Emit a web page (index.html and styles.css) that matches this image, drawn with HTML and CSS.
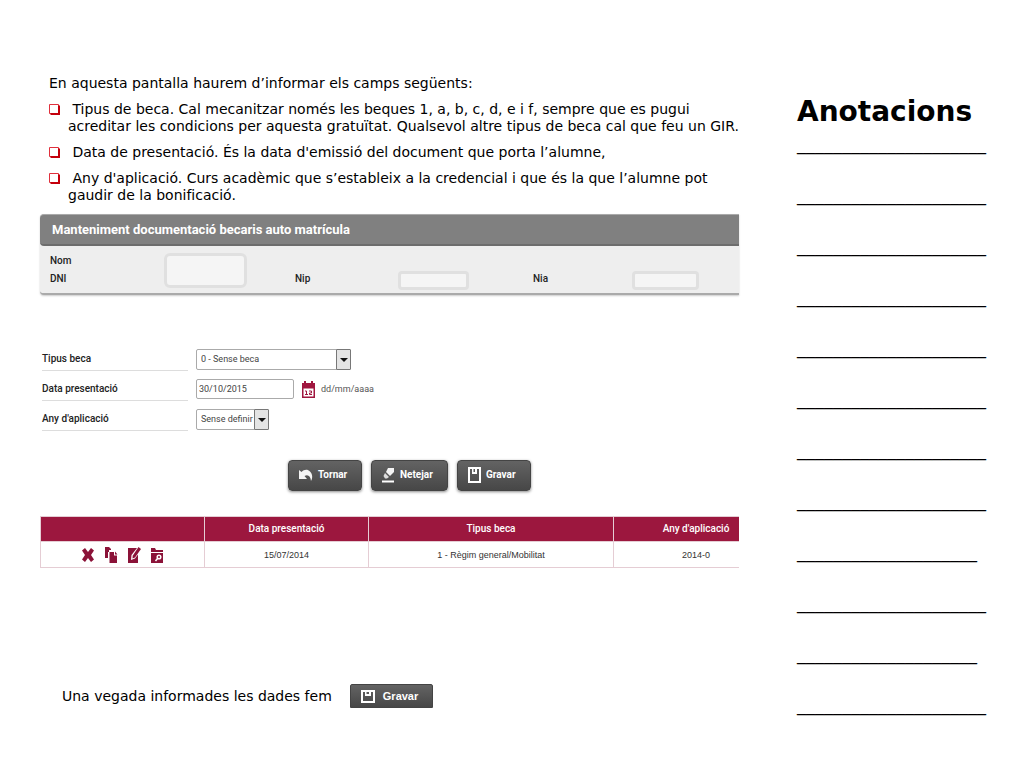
FILE: index.html
```html
<!DOCTYPE html>
<html lang="ca">
<head>
<meta charset="utf-8">
<meta name="viewport" content="width=device-width, initial-scale=1">
<title>Manteniment documentació becaris</title>
<link rel="stylesheet" href="styles.css">
</head>
<body>
<div class="slide">
  <main class="content">
    <section class="intro">
      <p>En aquesta pantalla haurem d’informar els camps següents:</p>
      <ul class="bullets">
        <li><svg class="bullet" viewBox="0 0 11 11" aria-hidden="true"><path d="M.5 .5H9.500V9.500H.5Z" fill="#fff" stroke="#e0303c"/><path d="M10 1.500V10H1.500" fill="none" stroke="#c4000c" stroke-width="2"/></svg><span class="item">&nbsp;Tipus de beca. Cal mecanitzar només les beques 1, a, b, c, d, e i f, sempre que es pugui<br>acreditar les condicions per aquesta gratuïtat. Qualsevol altre tipus de beca cal que feu un GIR.</span></li>
        <li><svg class="bullet" viewBox="0 0 11 11" aria-hidden="true"><path d="M.5 .5H9.500V9.500H.5Z" fill="#fff" stroke="#e0303c"/><path d="M10 1.500V10H1.500" fill="none" stroke="#c4000c" stroke-width="2"/></svg><span class="item">&nbsp;Data de presentació. És la data d'emissió del document que porta l’alumne,</span></li>
        <li><svg class="bullet" viewBox="0 0 11 11" aria-hidden="true"><path d="M.5 .5H9.500V9.500H.5Z" fill="#fff" stroke="#e0303c"/><path d="M10 1.500V10H1.500" fill="none" stroke="#c4000c" stroke-width="2"/></svg><span class="item">&nbsp;Any d'aplicació. Curs acadèmic que s’estableix a la credencial i que és la que l’alumne pot<br>gaudir de la bonificació.</span></li>
      </ul>
    </section>

    <div class="app">
      <section class="panel">
        <h2 class="panel-title">Manteniment documentació becaris auto matrícula</h2>
        <div class="panel-body">
          <div class="labels"><span>Nom</span><span>DNI</span></div>
          <div class="blank blank-large"></div>
          <span class="label">Nip</span>
          <div class="blank"></div>
          <span class="label">Nia</span>
          <div class="blank blank-last"></div>
        </div>
      </section>

      <form class="form">
        <div class="row">
          <label for="tipus">Tipus beca</label>
          <span class="select select-wide"><select id="tipus"><option>0 - Sense beca</option></select><span class="arrow"></span></span>
        </div>
        <div class="row">
          <label for="data">Data presentació</label>
          <input id="data" type="text" value="30/10/2015">
          <svg class="calendar" viewBox="0 0 13 17" aria-hidden="true"><path d="M2 0h2v2h5V0h2v2h2v4H0V2h2z" fill="#a0163f"/><path d="M.75 6V16.250H12.250V6" fill="#fff" stroke="#a0163f" stroke-width="1.500"/><path d="M1 6.500h11" stroke="#a0163f" stroke-width="2"/><path d="M3 10h1.500v4M3 13.500h3M7 10h2.500v2h-2v1.500h2.500" fill="none" stroke="#a0163f"/></svg>
          <span class="hint">dd/mm/aaaa</span>
        </div>
        <div class="row">
          <label for="any">Any d'aplicació</label>
          <span class="select"><select id="any"><option>Sense definir</option></select><span class="arrow"></span></span>
        </div>
        <div class="actions">
          <button type="button"><svg width="14" height="14" viewBox="0 0 14 14" aria-hidden="true"><path d="M0 2v9h8L5.500 8C9 6 11.500 8 12 13c2-3 1.500-7-1-9.500C8.500 1 5 1.500 2.500 4z" fill="#f4f4f4"/></svg>Tornar</button>
          <button type="button"><svg width="13" height="16" viewBox="0 0 13 16" aria-hidden="true"><path d="M6 1h6v4L8 9 4 5z" fill="#f4f4f4"/><path d="M3 6l4 4-2 1.500H3L1.500 9z" fill="#ddd"/><path d="M0 14.500h12" stroke="#fff" stroke-width="2"/></svg>Netejar</button>
          <button type="button"><svg width="13" height="16" viewBox="0 0 13 16" aria-hidden="true"><path d="M1 1h11v14H1z" fill="none" stroke="#fff" stroke-width="2"/><path d="M4 1h1.500v4H7V1h2v6H4z" fill="#fff"/></svg>Gravar</button>
        </div>
      </form>

      <table class="grid">
        <colgroup><col class="c1"><col class="c2"><col class="c3"><col class="c4"></colgroup>
        <thead><tr><th aria-label="Accions"></th><th>Data presentació</th><th>Tipus beca</th><th class="last">Any d'aplicació</th></tr></thead>
        <tbody><tr>
          <td><div class="tools">
            <button type="button" aria-label="Esborrar"><svg viewBox="0 0 14 16"><path d="M1 3.500L4 1l3 4 3-4 3 2.500L10 8l3 4.500-3 2.500-3-4-3 4-3-2.500L4 8z" fill="#8b1238"/></svg></button>
            <button type="button" aria-label="Copiar"><svg viewBox="0 0 14 16"><path d="M1 0h4l2 2v1H5v2H4v6H1z" fill="#8b1238"/><path d="M5.500 5H10v3.500h3V16H5.500z" fill="#8b1238"/><path d="M11 4.500l2.500 3H11z" fill="#8b1238"/></svg></button>
            <button type="button" aria-label="Editar"><svg viewBox="0 0 14 16"><path d="M1 1h9L4.500 8 4 13l4-1.500 3-4V16H1z" fill="#8b1238"/><path d="M11.500 0L14 2 8 10.500l-2.500 1 .2-2.800z" fill="#8b1238"/></svg></button>
            <button type="button" aria-label="Consultar"><svg viewBox="0 0 14 16"><path d="M1 1h4l1 2h7v2H1zM1 6h12v10H1z" fill="#8b1238"/><circle cx="9" cy="10" r="1.800" fill="none" stroke="#fff" stroke-width="1.500"/><path d="M7.500 11.500L5.500 14" stroke="#fff" stroke-width="1.500"/></svg></button>
          </div></td>
          <td>15/07/2014</td><td>1 - Règim general/Mobilitat</td><td class="last">2014-0</td>
        </tr></tbody>
      </table>
    </div>

    <div class="closing">
      <p>Una vegada informades les dades fem</p>
      <button type="button"><svg width="14" height="13" viewBox="0 0 14 13" aria-hidden="true"><path d="M1 1h12v11H1z" fill="none" stroke="#fff" stroke-width="2"/><path d="M4 1h1.500v3H8V1h2v5H4z" fill="#fff"/></svg>Gravar</button>
    </div>
  </main>

  <aside class="notes">
    <h1>Anotacions</h1>
    <div class="lines">
      <p>_____________________</p><p>_____________________</p><p>_____________________</p><p>_____________________</p>
      <p>_____________________</p><p>_____________________</p><p>_____________________</p><p>_____________________</p>
      <p>____________________</p><p>_____________________</p><p>____________________</p><p>_____________________</p>
    </div>
  </aside>
</div>
</body>
</html>
```
FILE: styles.css
```css
* { box-sizing: border-box; }
body { margin: 0; background: #fff; color: #000; font-family: "DejaVu Sans", sans-serif; font-size: 14px; line-height: 17px; }
p, h1, h2, ul { margin: 0; padding: 0; }
button, select, input { font-family: inherit; margin: 0; }
.slide { display: flex; gap: 41px; padding: 75px 32px 0 40px; }
.content { flex: 1; min-width: 0; }
.intro { padding-left: 9px; display: flex; flex-direction: column; gap: 9px; white-space: nowrap; }
.bullets { list-style: none; display: flex; flex-direction: column; gap: 9px; }
.bullets li { display: flex; gap: 8px; }
.bullet { width: 11px; height: 11px; margin-top: 3px; flex: none; }
.app { margin: 10px 17px 0 0; font-family: Roboto, "Liberation Sans", sans-serif; font-size: 10px; color: #222; }
.panel { background: #eee; border-bottom: 2px solid #aaa; border-radius: 4px 0 0 4px; box-shadow: 0 1px 2px #ccc; }
.panel-title { height: 32px; padding-left: 12px; background: #808080; border-top: 1px solid #aaa; border-bottom: 2px solid #6c6c6c; border-radius: 4px 0 0 4px; color: #fff; font-size: 13px; line-height: 30px; }
.panel-body { height: 47px; display: flex; align-items: flex-end; padding: 0 40px 3px 10px; font-weight: 500; }
.labels { display: flex; flex-direction: column; width: 114px; line-height: 18px; margin-bottom: 2px; }
.blank { width: 71px; height: 19px; border: 3px solid #e0e0e0; border-radius: 4px; background: #f5f5f5; }
.blank-large { width: 83px; height: 35px; margin: 0 48px 2px 0; border-radius: 6px; }
.blank-last { width: 67px; }
.label { width: 103px; line-height: 18px; margin-bottom: 2px; }
.blank + .label + .blank + .label { margin-left: 64px; width: 99px; }
.form { padding: 53px 0 0 2px; display: flex; flex-direction: column; gap: 8px; }
.row { height: 22px; display: flex; align-items: center; }
.row label { width: 146px; height: 24px; margin-right: 8px; line-height: 24px; border-bottom: 1px solid #ddd; font-weight: 500; color: #222; }
.select { position: relative; width: 73px; height: 21px; }
.select-wide { width: 155px; }
.select select, .row input { appearance: none; width: 100%; height: 100%; border: 1px solid #aaa; border-radius: 2px; background: #fff; color: #444; font-family: Roboto, sans-serif; font-size: 9px; padding: 0 4px; }
.row input { width: 98px; height: 20px; padding: 0 2px; }
.arrow { position: absolute; right: 0; top: 0; width: 15px; height: 21px; border: 1px solid #777; border-radius: 1px; background: #e4e4e4; pointer-events: none; }
.arrow::after { content: ""; position: absolute; left: 3px; top: 8px; border: 4px solid transparent; border-top-color: #111; border-bottom: 0; }
.calendar { width: 13px; height: 17px; margin: 0 6px 0 8px; }
.hint { color: #555; font-size: 9px; }
.actions { display: flex; gap: 9px; padding: 22px 0 0 246px; }
.actions button { height: 31px; width: 74px; padding: 0 0 2px 10px; display: flex; align-items: center; gap: 5px; border: 1px solid #444; border-radius: 4px; background: linear-gradient(#636363, #474747); box-shadow: 0 1px 3px #888; color: #fff; font-size: 10px; font-weight: bold; }
.actions button:nth-child(2) { width: 77px; }
.grid { width: 100%; margin-top: 25px; table-layout: fixed; border-collapse: collapse; line-height: 14px; }
.c1, .c2 { width: 164px; }
.c3 { width: 245px; }
.grid th, .grid td { padding: 0; text-align: center; white-space: nowrap; border: 1px solid #e5cdd4; border-right: 0; }
.grid th { height: 25px; background: #9c173e; color: #fff; font-weight: 500; }
.grid td { height: 26px; font-family: "Liberation Sans", sans-serif; font-size: 9px; color: #333; }
.grid .last { padding-left: 39px; }
.tools { display: flex; justify-content: center; gap: 9px; }
.tools button { padding: 0; border: 0; background: none; width: 14px; height: 16px; }
.tools svg { display: block; width: 14px; height: 16px; }
.closing { margin-top: 116px; padding-left: 22px; display: flex; align-items: center; gap: 18px; }
.closing button { width: 83px; height: 24px; padding: 0 10px; display: flex; align-items: center; gap: 8px; border: 1px solid #444; border-radius: 2px 2px 0 0; background: linear-gradient(#636363, #474747); color: #fff; font-family: "Liberation Sans", sans-serif; font-size: 11px; font-weight: bold; }
.notes { width: 195px; flex: none; padding-top: 19px; }
.notes h1 { font-size: 28px; line-height: 36px; }
.lines { font-size: 18px; line-height: 51px; margin-top: -12px; }
```
